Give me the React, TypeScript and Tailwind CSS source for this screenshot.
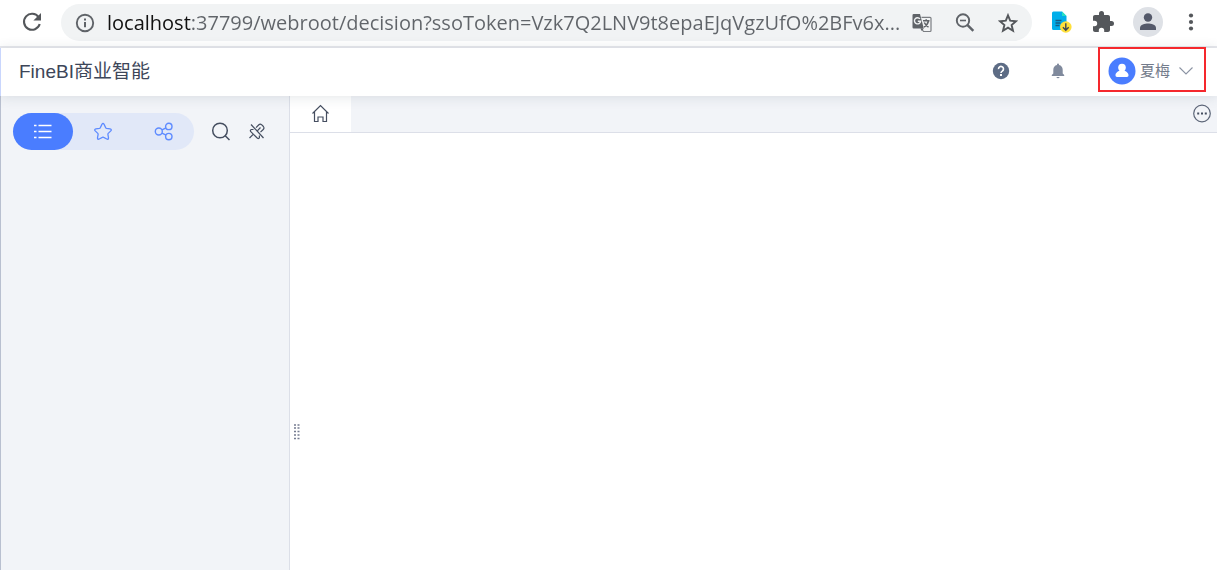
import { useState } from "react";

// Browser toolbar icons
const ReloadIcon = () => (
  <svg className="h-5 w-5" viewBox="0 0 20 20" fill="none">
    <path d="M16.6 5.2A8 8 0 1 0 17.7 12" stroke="#54575b" strokeWidth="2.1" />
    <path d="M19 1v7.6h-7.6z" fill="#54575b" />
  </svg>
);

const InfoIcon = () => (
  <svg className="h-5 w-5 shrink-0" viewBox="0 0 20 20" fill="none">
    <circle cx="10" cy="10" r="8.2" stroke="#5f6368" strokeWidth="1.9" />
    <path d="M10 9v5.2M10 5.4v2" stroke="#5f6368" strokeWidth="2" />
  </svg>
);

const TranslateIcon = () => (
  <svg className="h-5 w-5" viewBox="0 0 20 20" fill="none">
    <path
      d="M9.5 4.3H18a1 1 0 0 1 1 1V17.5a1 1 0 0 1-1 1h-6.500l-2-3"
      stroke="#7b7e82"
      strokeWidth="1.2"
    />
    <path
      d="M11 7.8h6.500M14.2 6.300v1.500M16.5 8c-.6 2.500-2 4.500-4.500 6M12.300 9.500c1 2.200 2.500 3.700 4.200 4.700"
      stroke="#5f6368"
      strokeWidth="1.5"
    />
    <path d="M1.7 1H8l3.800 14.500H1.700a1.200 1.200 0 0 1-1.200-1.200V2.200A1.200 1.200 0 0 1 1.700 1z" fill="#5f6368" />
    <path d="M8 5.900A3.100 3.100 0 1 0 8.600 8.300H5.800" stroke="#f1f3f4" strokeWidth="1.4" />
    <path d="M8.300 15.500h3.500l-2 2.600z" fill="#5f6368" />
  </svg>
);

const ZoomOutIcon = () => (
  <svg className="h-5 w-5" viewBox="0 0 20 20" fill="none" stroke="#5f6368">
    <circle cx="8" cy="7.5" r="6.2" strokeWidth="1.9" />
    <path d="M5 7.500h6" strokeWidth="1.6" />
    <path d="M12.300 11.800l6 6" strokeWidth="2.5" />
  </svg>
);

const BookmarkIcon = () => (
  <svg className="h-5 w-5" viewBox="0 0 20 20" fill="none">
    <path
      d="M10 2.300l2.200 5.400 5.800.5-4.400 3.800 1.400 5.700-5-3-5 3 1.400-5.700L2 8.200l5.800-.5z"
      stroke="#54575b"
      strokeWidth="1.9"
    />
  </svg>
);

const DownloaderIcon = () => (
  <svg className="h-6 w-6" viewBox="0 0 24 24" fill="none">
    <path d="M4.500 1.500H13l4.500 4.500v14H4.500A1.500 1.500 0 0 1 3 18.500v-15.500A1.500 1.500 0 0 1 4.500 1.500z" fill="#00aeea" />
    <path d="M13 1.500l4.500 4.500H13z" fill="#29e0c1" />
    <path d="M6.500 10.500h6M6.500 13h5M6.500 15.500h4" stroke="#155c86" strokeWidth="1.3" />
    <circle cx="16.800" cy="17" r="5.800" fill="#ffe03a" />
    <path d="M16.800 13.300v6.900M13.900 17.300l2.900 2.900 2.900-2.900" stroke="#3d4652" strokeWidth="1.4" />
  </svg>
);

const PuzzleIcon = () => (
  <svg className="h-[22px] w-[22px]" viewBox="1 1 22 22" fill="#54575b">
    <path d="M20.500 11H19V7c0-1.100-.9-2-2-2h-4V3.500a2.500 2.500 0 0 0-5 0V5H4c-1.100 0-2 .9-2 2v3.800h1.500a2.700 2.700 0 0 1 0 5.400H2V20c0 1.100.9 2 2 2h3.800v-1.500a2.700 2.700 0 0 1 5.400 0V22H17c1.100 0 2-.9 2-2v-4h1.500a2.500 2.500 0 0 0 0-5z" />
  </svg>
);

const ProfileIcon = () => (
  <svg className="h-[30px] w-[30px]" viewBox="0 0 30 30">
    <circle cx="15" cy="15" r="15" fill="#dee1e6" />
    <circle cx="15" cy="10.500" r="4.200" fill="#54596a" />
    <path d="M7 23v-2.200C7 17.500 12 16.500 15 16.500s8 1 8 4.300V23z" fill="#54596a" />
  </svg>
);

const MenuIcon = () => (
  <svg className="h-5 w-5" viewBox="0 0 20 20" fill="#54575b">
    <circle cx="10" cy="3.500" r="2.100" />
    <circle cx="10" cy="10" r="2.100" />
    <circle cx="10" cy="16.500" r="2.100" />
  </svg>
);

// Platform icons
const HelpIcon = () => (
  <svg className="h-[18px] w-[18px]" viewBox="0 0 18 18" fill="none">
    <circle cx="9" cy="9" r="8.200" fill="#5d6c85" />
    <path
      d="M6.500 7.100A2.500 2.500 0 1 1 10.400 9C9.500 9.600 9 9.900 9 10.900"
      stroke="#fff"
      strokeWidth="1.600"
    />
    <path d="M9 12v2" stroke="#fff" strokeWidth="2" />
  </svg>
);

const BellIcon = () => (
  <svg className="h-4 w-4" viewBox="0 0 16 16" fill="#808a9d">
    <path d="M8 .5a1 1 0 0 1 1 1v.6c2.300.5 3.700 2.400 3.700 4.700v3.700l1.500 1.500v1H1.800v-1l1.500-1.500V6.800c0-2.300 1.400-4.200 3.700-4.700v-.6a1 1 0 0 1 1-1zM6.500 14h3a1.500 1.200 0 0 1-3 0z" />
  </svg>
);

const AvatarIcon = () => (
  <svg className="h-7 w-7" viewBox="0 0 28 28">
    <circle cx="14" cy="14" r="13.500" fill="#4a7dff" />
    <circle cx="14" cy="10.500" r="3.800" fill="#fff" />
    <path d="M11.700 13h4.600c.2 1.300 4.200 1.800 4.200 5.300 0 1.100-.6 1.700-1.500 1.700H9c-.9 0-1.500-.6-1.500-1.700 0-3.500 4-4 4.200-5.300z" fill="#fff" />
  </svg>
);

const ChevronIcon = () => (
  <svg className="h-4 w-4" viewBox="0 0 16 16" fill="none">
    <path d="M1.500 4.500L8 11l6.500-6.500" stroke="#8b93a3" strokeWidth="1.1" />
  </svg>
);

const ListIcon = () => (
  <svg className="h-5 w-5" viewBox="0 0 20 20" stroke="#fff" strokeWidth="1.6">
    <path d="M1 3.500h2.500M1 9.500h2.500M1 15.500h2.500M5.500 3.500h13M5.500 9.500h13M5.500 15.500h13" />
  </svg>
);

const StarIcon = () => (
  <svg className="h-5 w-5" viewBox="0 0 20 20" fill="none">
    <path
      d="M8.900 2.400q1.100-1.900 2.200 0l1.600 3.300q.3.600.9.700l3.500.5q2 .5.700 2l-2.600 2.500q-.4.400-.3 1l.6 3.400q.1 2-1.800 1.200l-3-1.600q-.7-.4-1.400 0l-3 1.600q-1.900.8-1.800-1.200l.6-3.400q.1-.6-.3-1L2.200 8.900q-1.300-1.500.7-2l3.500-.5q.6-.1.900-.7z"
      stroke="#5e8bff"
      strokeWidth="1.300"
    />
  </svg>
);

const ShareIcon = () => (
  <svg className="h-5 w-5" viewBox="0 0 20 20" fill="none" stroke="#5e8bff" strokeWidth="1.400">
    <circle cx="4.800" cy="9.500" r="3.500" />
    <circle cx="14.800" cy="4.400" r="3.200" />
    <circle cx="14.800" cy="14.600" r="3.200" />
    <path d="M8 7.900l4-2M8 11.100l4 2" />
  </svg>
);

const SearchIcon = () => (
  <svg className="h-5 w-5" viewBox="0 0 20 20" fill="none" stroke="#454e60" strokeWidth="1.500">
    <circle cx="9" cy="8.500" r="7.300" />
    <path d="M14 13.500l4.500 4.500" />
  </svg>
);

const UnpinIcon = () => (
  <svg className="h-[18px] w-[18px]" viewBox="0 0 18 18" fill="none" stroke="#454e60" strokeWidth="1.2">
    <path d="M3 1.500l12.500 13.500" />
    <path d="M8 4.700l2.600-2.700q1.500-1.400 3-.3l1.800 1.800q1.200 1.500-.2 3l-2.700 2.700" />
    <path d="M12.500 4.500L9.300 7.900" />
    <path d="M5.500 6.500H3.500q-2 .8-.5 2.300l6.200 6.200q1.600 1.300 2.200-.5v-2" />
    <path d="M5.200 11.300L1.500 15" />
  </svg>
);

const HomeIcon = () => (
  <svg className="h-5 w-5" viewBox="0 0 20 20" fill="none" stroke="#454e60" strokeWidth="1.2">
    <path d="M1.500 9.500L9.500 1.500l8 8" />
    <path d="M3.500 8v9.500H7v-4.500h5v4.500h3.500V8" />
  </svg>
);

const MoreIcon = () => (
  <svg className="h-5 w-5" viewBox="0 0 20 20" fill="none">
    <circle cx="10" cy="9.500" r="8.300" stroke="#5d6678" strokeWidth="1.2" />
    <path d="M5.200 9.500h2M9 9.500h2M12.800 9.500h2" stroke="#454e60" strokeWidth="1.800" />
  </svg>
);

const GripIcon = () => (
  <svg className="h-4 w-2" viewBox="0 0 8 16" stroke="#747b90" strokeWidth="1.500">
    <path d="M1 1h2M1 4h2M1 7.500h2M1 11h2M1 14.500h2M4.500 1h2M4.500 4h2M4.500 7.500h2M4.500 11h2M4.500 14.500h2" />
  </svg>
);

const modes = [
  { label: "目录", icon: <ListIcon /> },
  { label: "收藏", icon: <StarIcon /> },
  { label: "分享", icon: <ShareIcon /> },
];

const BrowserBar = () => {
  const [url, setUrl] = useState(
    "localhost:37799/webroot/decision?ssoToken=Vzk7Q2LNV9t8epaEJqVgzUfO%2BFv6x..."
  );

  return (
    <div className="flex h-12 shrink-0 items-start border-b-2 border-[#e7e8ed] pt-1 pr-4 pl-[22px]">
      <button aria-label="重新加载" className="mt-2">
        <ReloadIcon />
      </button>

      <div className="ml-[19px] flex h-[37px] min-w-0 flex-1 items-center rounded-full bg-[#f1f3f4] px-[14px]">
        <InfoIcon />
        {/* host is black, the rest of the address is grey */}
        <input
          aria-label="地址"
          value={url}
          onChange={(e) => setUrl(e.target.value)}
          className="ml-3 h-8 min-w-0 flex-1 bg-[linear-gradient(90deg,#111_84px,#606469_84px)] bg-clip-text font-['Open_Sans','Noto_Sans',sans-serif] text-[20px] text-transparent outline-none"
        />
        <div className="ml-3 flex gap-[23px]">
          <button aria-label="翻译">
            <TranslateIcon />
          </button>
          <button aria-label="缩放">
            <ZoomOutIcon />
          </button>
          <button aria-label="收藏此页">
            <BookmarkIcon />
          </button>
        </div>
      </div>

      <div className="ml-[17px] flex h-9 items-center gap-[18px]">
        <button aria-label="下载助手">
          <DownloaderIcon />
        </button>
        <button aria-label="扩展程序" className="px-px">
          <PuzzleIcon />
        </button>
        <button aria-label="用户">
          <ProfileIcon />
        </button>
        <button aria-label="菜单">
          <MenuIcon />
        </button>
      </div>
    </div>
  );
};

const Header = () => (
  <header className="relative z-10 flex h-12 shrink-0 items-center border-l border-[#c9d6fd] bg-white pr-[11px] pl-[18px] shadow-[0_1px_12px_rgba(60,80,90,0.14)]">
    <h1 className="text-[19px] text-[#3d4659]">FineBI商业智能</h1>
    <div className="-mt-0.5 ml-auto flex items-center">
      <button aria-label="帮助">
        <HelpIcon />
      </button>
      <button aria-label="消息" className="ml-10">
        <BellIcon />
      </button>
      <button className="-mt-1 ml-8 flex h-[45px] items-center border-2 border-[#f5282d] pt-1 pr-[10px] pl-2 text-[15px] text-[#737b8b]">
        <AvatarIcon />
        <span className="mr-2 ml-1">夏梅</span>
        <ChevronIcon />
      </button>
    </div>
  </header>
);

const Sidebar = () => {
  const [active, setActive] = useState(0);

  return (
    <aside className="flex w-[290px] shrink-0 items-start border-r border-l border-r-[#dcdfe8] border-l-[#b9c0d0] bg-[#f2f4f8] pt-[17px] pl-3">
      <div className="flex h-[37px] w-[181px] rounded-full bg-[#e1e8f8]">
        {modes.map((mode, i) => (
          <button
            key={mode.label}
            aria-label={mode.label}
            aria-pressed={i === active}
            onClick={() => setActive(i)}
            className={`flex flex-1 items-center justify-center rounded-full ${
              i === active ? "bg-[#4a7dff]" : ""
            }`}
          >
            {mode.icon}
          </button>
        ))}
      </div>
      <div className="ml-[17px] flex h-[37px] items-center gap-[17px]">
        <button aria-label="搜索">
          <SearchIcon />
        </button>
        <button aria-label="取消固定">
          <UnpinIcon />
        </button>
      </div>
    </aside>
  );
};

const App = () => (
  <div className="flex min-h-screen flex-col bg-white font-['Liberation_Sans','Noto_Sans_CJK_SC',sans-serif]">
    <BrowserBar />
    <Header />
    <div className="flex flex-1">
      <Sidebar />
      <main className="flex min-w-0 flex-1 flex-col">
        <div className="flex h-[37px] items-stretch border-b border-[#dcdfe8] bg-[#f2f4f8]">
          <button
            aria-label="首页"
            className="flex w-[61px] items-center justify-center bg-white"
          >
            <HomeIcon />
          </button>
          <button aria-label="更多" className="mr-[5px] ml-auto">
            <MoreIcon />
          </button>
        </div>
        <div className="flex flex-1 items-center pt-40 pl-[3px]">
          <GripIcon />
        </div>
      </main>
    </div>
  </div>
);

export default App;
